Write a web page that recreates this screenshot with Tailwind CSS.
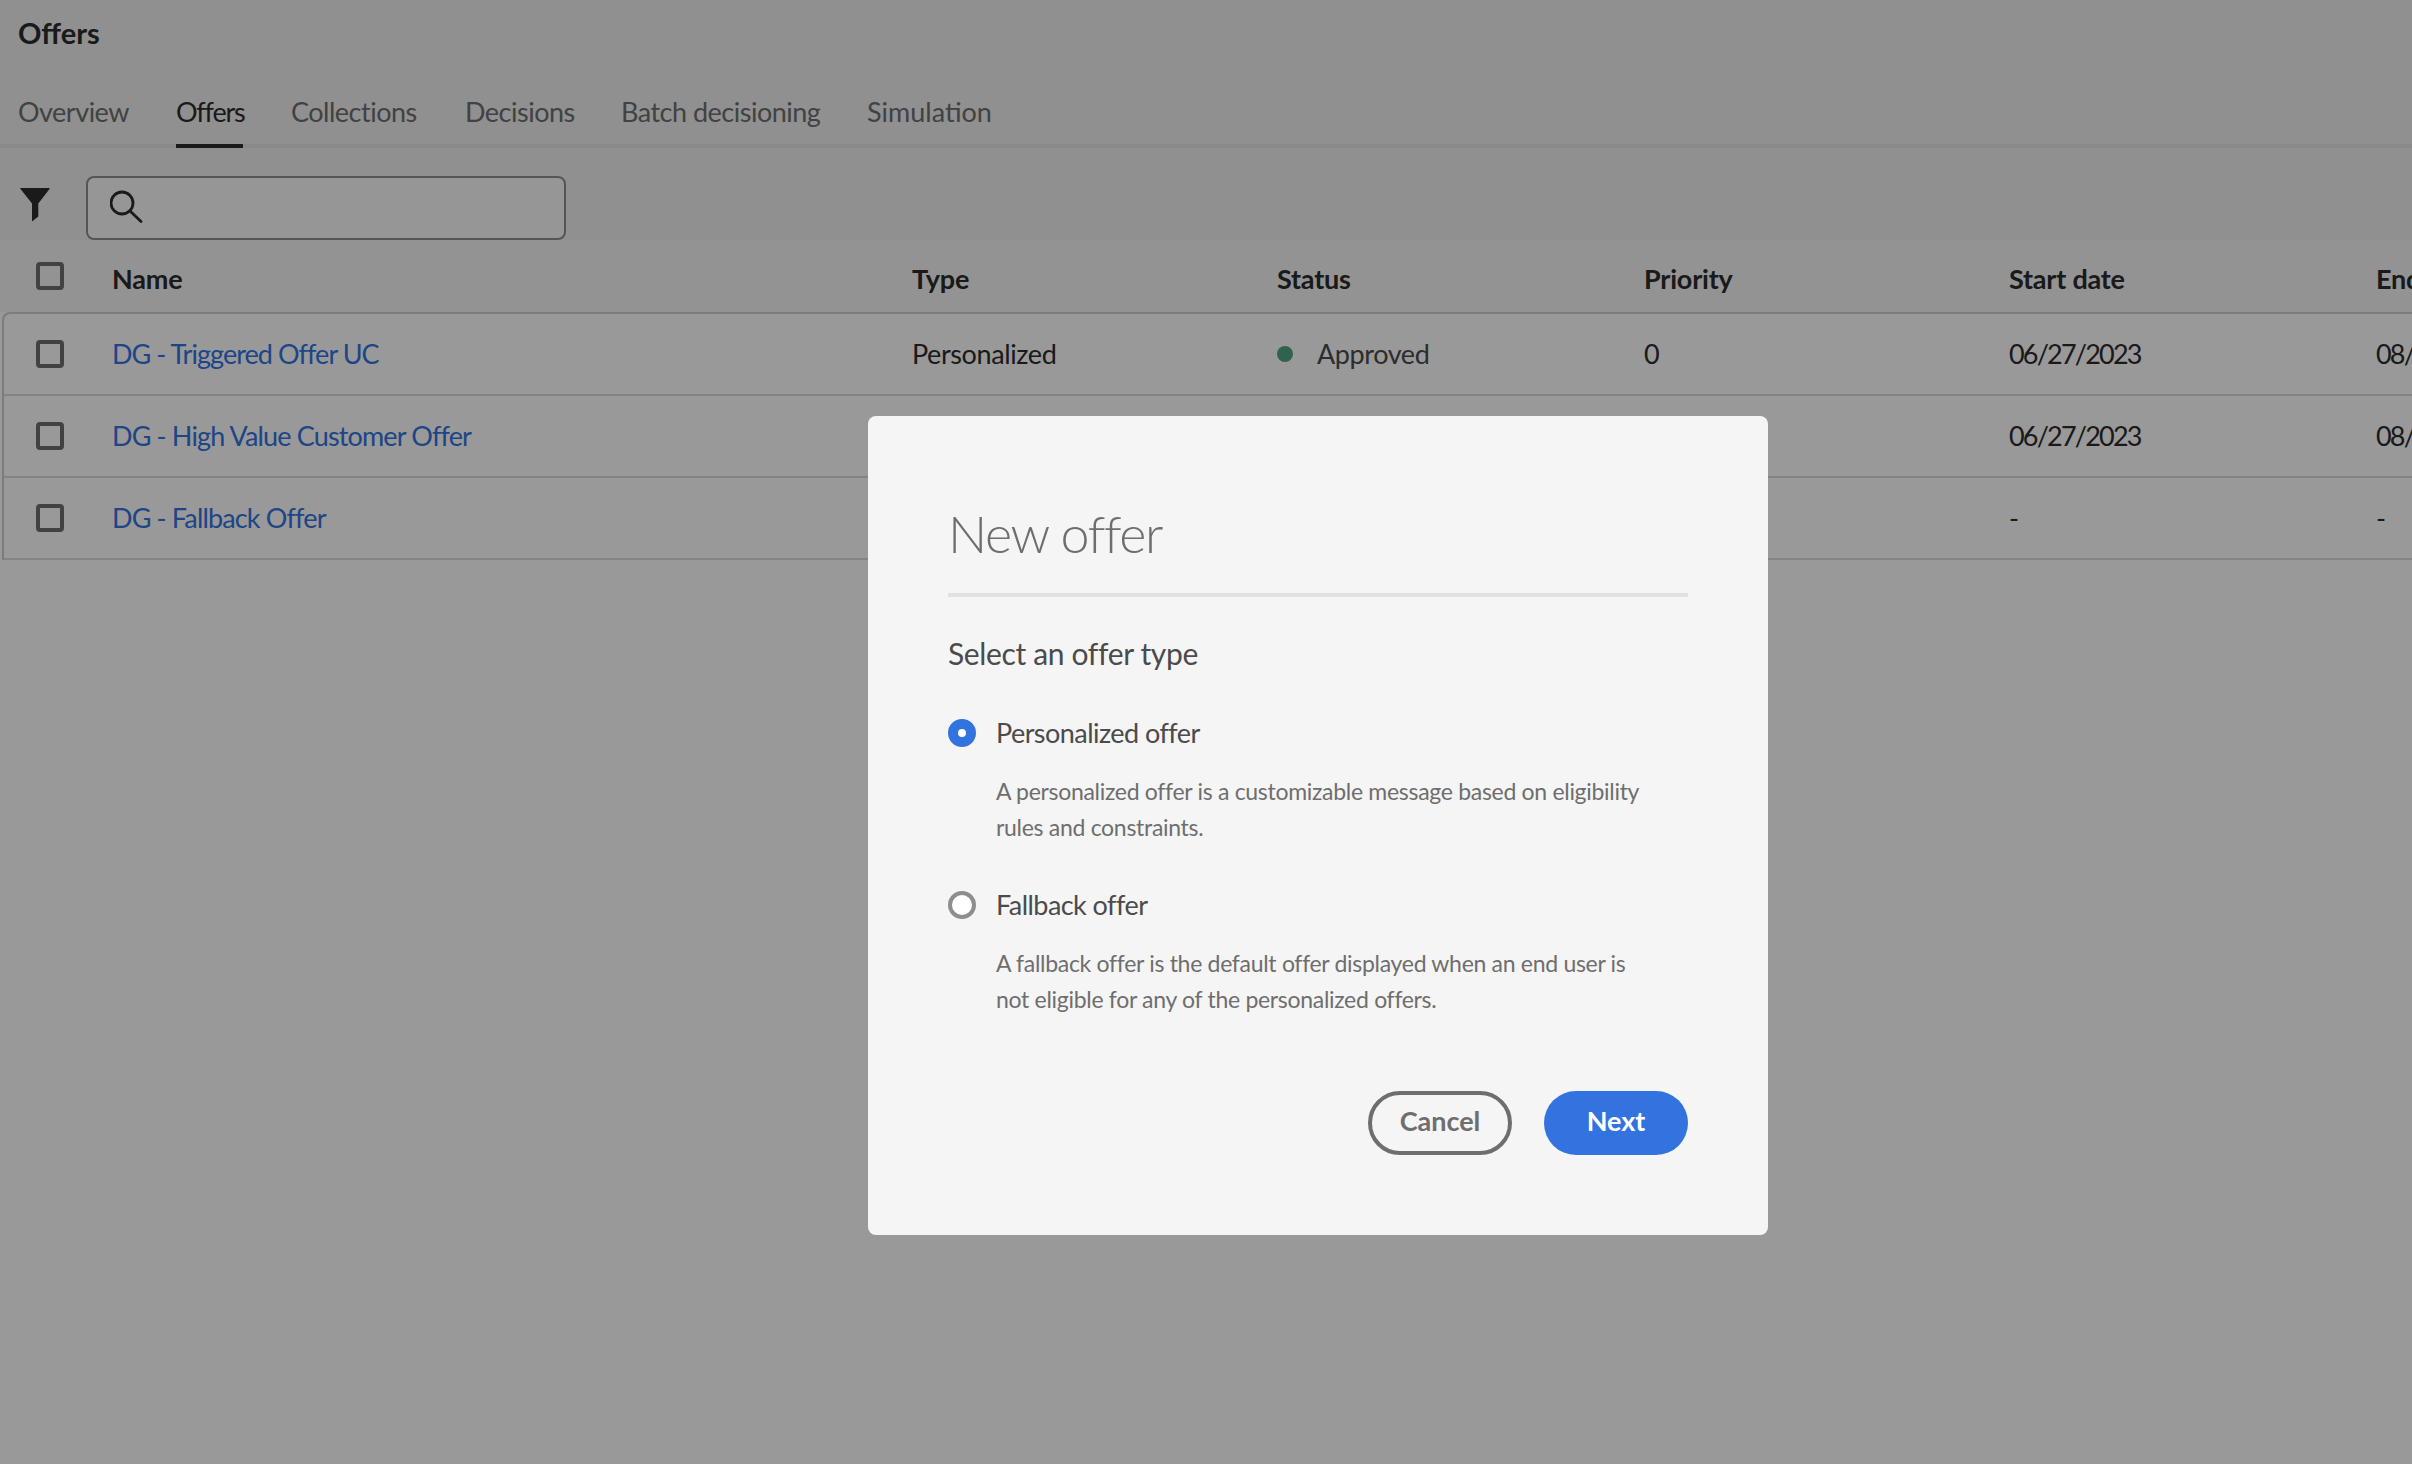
<!DOCTYPE html>
<html>
<head>
<meta charset="utf-8">
<script src="https://cdn.jsdelivr.net/npm/@tailwindcss/browser@4"></script>
</head>
<body class="m-0 overflow-hidden">
<div class="relative w-[2412px] h-[1464px] overflow-hidden bg-[#ffffff] font-['Lato','Open_Sans',sans-serif] text-[#2c2c2c]">
  <!-- page -->
  <header class="bg-[#f0f0f0]">
    <div class="h-[66px] pl-[18px] flex items-center pb-[2px]"><h1 class="text-[29px] font-bold leading-none">Offers</h1></div>
    <nav class="h-[82px] pl-[18px] flex gap-[48px] border-b-4 border-[#e4e4e4] text-[27px] tracking-[-0.5px] text-[#6e6e6e] whitespace-nowrap">
      <a class="h-[82px] shrink-0 flex items-center pt-[10px] w-[110px]">Overview</a>
      <a class="h-[82px] shrink-0 flex items-center pt-[14px] w-[67px] tracking-[-1.2px] text-[#2c2c2c] border-b-4 border-[#2c2c2c]">Offers</a>
      <a class="h-[82px] shrink-0 flex items-center pt-[10px] w-[126px]">Collections</a>
      <a class="h-[82px] shrink-0 flex items-center pt-[10px] w-[108px]">Decisions</a>
      <a class="h-[82px] shrink-0 flex items-center pt-[10px] w-[198px]">Batch decisioning</a>
      <a class="h-[82px] shrink-0 flex items-center pt-[10px] tracking-[0px]">Simulation</a>
    </nav>
    <div class="h-[92px] pt-[28px] pl-[20px] flex gap-[36px]">
      <svg class="w-[30px] h-[34px] mt-[12px] shrink-0" viewBox="0 0 30 34"><path d="M0.500 0H29.500Q30 0 29.500 1L18.300 15.500V28.500L12 33.500V15.500L0.500 1Q0 0 0.500 0Z" fill="#2c2c2c"/></svg>
      <div class="w-[480px] h-[64px] border-2 border-[#8e8e8e] rounded-[8px] bg-[#fafafa] flex pl-[22px] pt-[12px]">
        <svg class="w-[34px] h-[34px]" viewBox="0 0 34 34" fill="none" stroke="#2c2c2c" stroke-width="2.800"><circle cx="12" cy="13" r="11"/><path d="M20 21L31 31.500" stroke-linecap="round"/></svg>
      </div>
    </div>
  </header>
  <main>
    <div class="h-[72px] flex pl-[36px] bg-[#f5f5f5]">
      <span class="w-[28px] h-[28px] shrink-0 mt-[22px] border-4 border-[#6e6e6e] rounded-[4px]"></span>
      <div class="ml-[48px] pt-[26px] grid grid-cols-[800px_365px_367px_365px_367px_366px] text-[27px] font-bold leading-[26px] tracking-[-0.2px] whitespace-nowrap">
        <span>Name</span><span>Type</span><span>Status</span><span>Priority</span><span>Start date</span><span>End date</span>
      </div>
    </div>
    <div class="ml-[2px] border-l-2 border-t-2 border-[#cfcfcf] rounded-tl-[8px] text-[27px] tracking-[-0.4px] whitespace-nowrap">
      <div class="h-[82px] border-b-2 border-[#dcdcdc] flex items-center pl-[32px]">
        <span class="w-[28px] h-[28px] shrink-0 border-4 border-[#6e6e6e] rounded-[4px]"></span>
        <div class="ml-[48px] grid grid-cols-[800px_365px_367px_365px_367px_366px]">
          <a class="text-[#3373e0] tracking-[-0.95px]">DG - Triggered Offer UC</a><span>Personalized</span>
          <span class="flex items-center text-[#4b4b4b]"><i class="w-[16px] h-[16px] rounded-full bg-[#4fa583] mr-[24px]"></i>Approved</span>
          <span>0</span><span class="tracking-[-1.8px]">06/27/2023</span><span class="tracking-[-1.8px]">08/27/2023</span>
        </div>
      </div>
      <div class="h-[82px] border-b-2 border-[#dcdcdc] flex items-center pl-[32px]">
        <span class="w-[28px] h-[28px] shrink-0 border-4 border-[#6e6e6e] rounded-[4px]"></span>
        <div class="ml-[48px] grid grid-cols-[800px_365px_367px_365px_367px_366px]">
          <a class="text-[#3373e0] tracking-[-0.85px]">DG - High Value Customer Offer</a><span>Personalized</span>
          <span class="flex items-center text-[#4b4b4b]"><i class="w-[16px] h-[16px] rounded-full bg-[#4fa583] mr-[24px]"></i>Approved</span>
          <span>0</span><span class="tracking-[-1.8px]">06/27/2023</span><span class="tracking-[-1.8px]">08/27/2023</span>
        </div>
      </div>
      <div class="h-[82px] border-b-2 border-[#dcdcdc] flex items-center pl-[32px]">
        <span class="w-[28px] h-[28px] shrink-0 border-4 border-[#6e6e6e] rounded-[4px]"></span>
        <div class="ml-[48px] grid grid-cols-[800px_365px_367px_365px_367px_366px]">
          <a class="text-[#3373e0] tracking-[-0.85px]">DG - Fallback Offer</a><span>Fallback</span>
          <span class="flex items-center text-[#4b4b4b]"><i class="w-[16px] h-[16px] rounded-full bg-[#4fa583] mr-[24px]"></i>Approved</span>
          <span>0</span><span>-</span><span>-</span>
        </div>
      </div>
    </div>
  </main>
  <!-- underlay -->
  <div class="absolute inset-0 bg-black/40"></div>
  <!-- dialog -->
  <section class="absolute left-[868px] top-[416px] w-[900px] h-[819px] bg-[#f5f5f5] rounded-[8px] px-[80px] pt-[78px]">
    <h2 class="h-[103px] border-b-4 border-[#e1e1e1] text-[52px] font-light leading-[78px] tracking-[-1.4px] text-[#6e6e6e]">New offer</h2>
    <p class="mt-[38px] text-[30px] leading-[36px] tracking-[-0.35px] text-[#4b4b4b]">Select an offer type</p>
    <label class="mt-[44px] flex items-center gap-[20px] h-[36px] text-[27px] tracking-[-0.55px] text-[#4b4b4b]">
      <span class="w-[28px] h-[28px] shrink-0 rounded-full border-[10px] border-[#3373e0] bg-white"></span>Personalized offer
    </label>
    <p class="ml-[48px] mt-[22px] text-[23px] leading-[36px] tracking-[-0.3px] text-[#6e6e6e] w-[652px]">A personalized offer is a customizable message based on eligibility rules and constraints.</p>
    <label class="mt-[42px] flex items-center gap-[20px] h-[36px] text-[27px] tracking-[-0.55px] text-[#4b4b4b]">
      <span class="w-[28px] h-[28px] shrink-0 rounded-full border-4 border-[#8e8e8e] bg-white"></span>Fallback offer
    </label>
    <p class="ml-[48px] mt-[22px] text-[23px] leading-[36px] tracking-[-0.3px] text-[#6e6e6e] w-[652px]">A fallback offer is the default offer displayed when an end user is not eligible for any of the personalized offers.</p>
    <div class="mt-[74px] flex justify-end gap-[32px]">
      <button class="w-[144px] h-[64px] pb-[3px] rounded-full border-4 border-[#6e6e6e] text-[27px] font-bold text-[#6e6e6e]">Cancel</button>
      <button class="w-[144px] h-[64px] pb-[3px] rounded-full bg-[#3373e0] text-[27px] font-bold text-white">Next</button>
    </div>
  </section>
</div>
</body>
</html>
